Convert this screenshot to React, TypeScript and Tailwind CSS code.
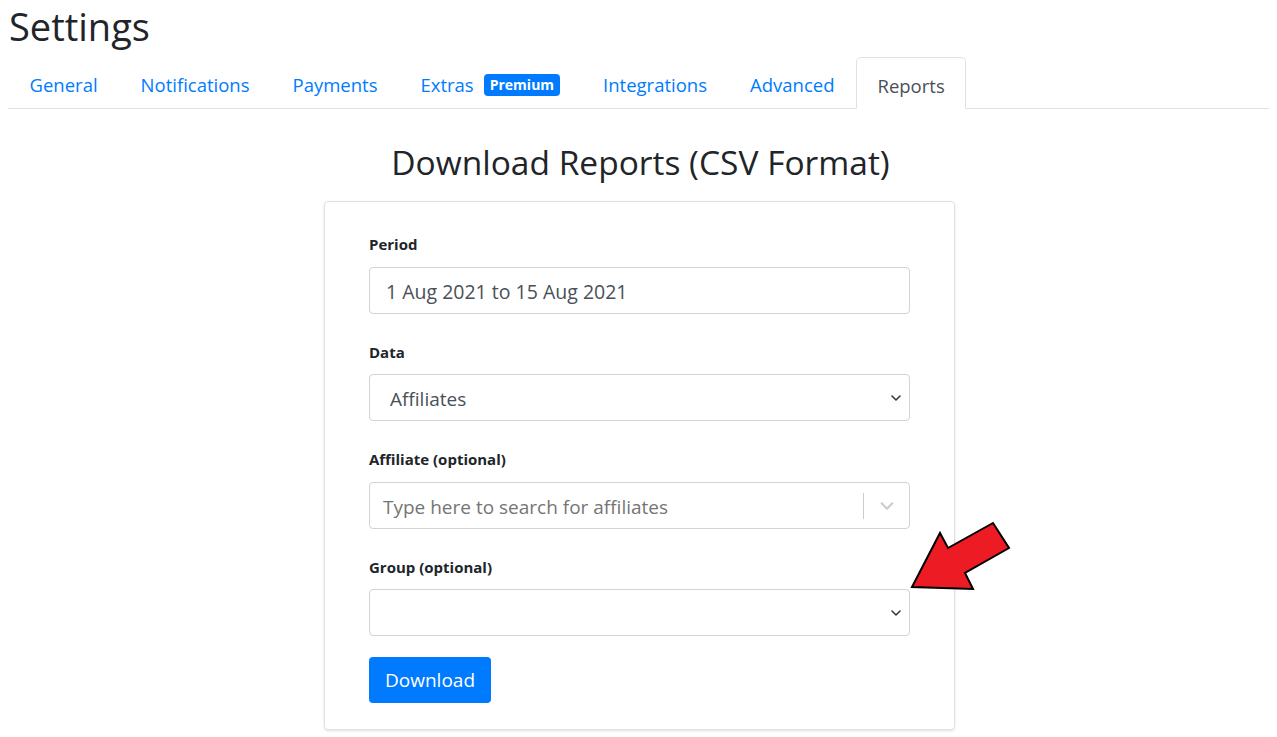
import React from "react";

const font = { fontFamily: '"Open Sans", "Noto Sans", sans-serif' };

function Chevron({ className = "" }: { className?: string }) {
  return (
    <svg viewBox="0 0 10 6" className={className} fill="none" stroke="currentColor" strokeWidth="1.6" strokeLinecap="round" strokeLinejoin="round">
      <path d="M1 1l4 4 4-4" />
    </svg>
  );
}

const tabs = ["General", "Notifications", "Payments", "Extras", "Integrations", "Advanced"];

export default function App() {
  return (
    <div className="relative w-[1277px] h-[737px] bg-white text-[#212529] overflow-hidden" style={font}>
      <div className="px-2">
        <h1 className="text-[38px] leading-[52px] pl-px">Settings</h1>
        <ul className="flex border-b border-[#dee2e6] mt-[5px]">
          {tabs.map((t) => (
            <li key={t} className="h-[51px] px-[20.5px] pt-[5px] flex items-center gap-[10px] text-[#007bff] text-[18.5px] -mb-px border border-transparent">
              <span>{t}</span>
              {t === "Extras" && (
                <span className="bg-[#007bff] text-white text-[14px] font-bold rounded-[4px] px-[6px] leading-[22px]">Premium</span>
              )}
            </li>
          ))}
          <li className="h-[52px] px-[20.5px] pt-[5px] flex items-center text-[#495057] text-[18.5px] -mb-px border border-[#dee2e6] border-b-white rounded-t-[5px] bg-white">
            Reports
          </li>
        </ul>
      </div>
      <h2 className="text-center text-[33.5px] leading-[44px] mt-[31px] pl-[4px]">Download Reports (CSV Format)</h2>
      <div className="ml-[324px] mt-[17px] w-[631px] border border-[#dee2e6] rounded-[4px] shadow-sm px-[44px] pt-[31px] pb-[26px]">
        <div className="flex flex-col gap-[27px]">
          <div>
            <div className="text-[15px] font-bold leading-[22px] mb-[12px]">Period</div>
            <div className="h-[47px] border border-[#ced4da] rounded-[4px] flex items-center pl-[16px] pt-[2px] text-[19.5px] text-[#495057]">
              1 Aug 2021 to 15 Aug 2021
            </div>
          </div>
          <div>
            <div className="text-[15px] font-bold leading-[22px] mb-[11px]">Data</div>
            <div className="h-[47px] border border-[#ced4da] rounded-[4px] flex items-center pl-[20px] pr-[4px] text-[19px] text-[#495057]">
              <span className="flex-1 pt-[4px]">Affiliates</span>
              <Chevron className="w-[10px] h-[6px] text-[#343a40] mr-[4px]" />
            </div>
          </div>
          <div>
            <div className="text-[15px] font-bold leading-[22px] mb-[12px]">Affiliate (optional)</div>
            <div className="h-[47px] border border-[#ced4da] rounded-[4px] flex items-center pl-[13px] text-[19px] text-[#757575]">
              <span className="flex-1 pt-[4px]">Type here to search for affiliates</span>
              <span className="w-px h-[26px] bg-[#cccccc]" />
              <span className="w-[45px] flex justify-center">
                <Chevron className="w-[14px] h-[8px] text-[#cccccc]" />
              </span>
            </div>
          </div>
          <div>
            <div className="text-[15px] font-bold leading-[22px] mb-[11px]">Group (optional)</div>
            <div className="h-[47px] border border-[#ced4da] rounded-[4px] flex items-center justify-end pr-[8px]">
              <Chevron className="w-[10px] h-[6px] text-[#343a40]" />
            </div>
          </div>
        </div>
        <button className="mt-[21px] h-[46px] px-[16px] bg-[#007bff] text-white text-[19px] rounded-[4px]">Download</button>
      </div>
      <svg className="absolute left-0 top-0 pointer-events-none" width="1277" height="737">
        <polygon
          points="912,587 940,533 948,548 993,523 1009,548 965,573 973,589"
          fill="#ed1c24"
          stroke="#000"
          strokeWidth="2"
          strokeLinejoin="miter"
        />
      </svg>
    </div>
  );
}
